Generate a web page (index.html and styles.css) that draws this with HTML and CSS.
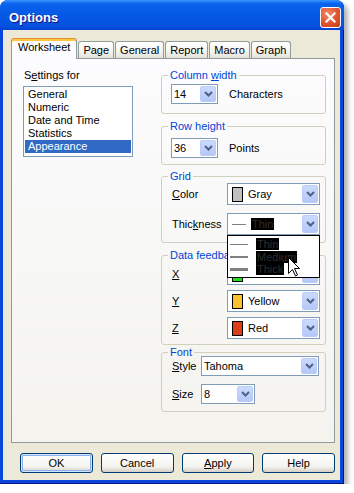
FILE: index.html
```html
<!DOCTYPE html>
<html lang="en">
<head>
  <meta charset="UTF-8">
  <meta name="viewport" content="width=device-width, initial-scale=1.0">
  <title>Options</title>
  <link rel="stylesheet" href="styles.css">
</head>
<body>
  <div class="window">
    <div class="titlebar">
      <span class="title">Options</span>
      <span class="close-btn">
        <svg width="11" height="11" viewBox="0 0 11 11"><path d="M1.5 1.5 L9.5 9.5 M9.5 1.5 L1.5 9.5" stroke="#fff" stroke-width="2.2" stroke-linecap="square"/></svg>
      </span>
    </div>

    <div class="client">
      <div class="tabs">
        <div class="tab active">Worksheet</div>
        <div class="tab">Page</div>
        <div class="tab">General</div>
        <div class="tab">Report</div>
        <div class="tab">Macro</div>
        <div class="tab">Graph</div>
      </div>

      <div class="panel">
        <!-- lista da esquerda -->
        <div class="settings">
          <div class="caption">S<u>e</u>ttings for</div>
          <ul class="listbox">
            <li>General</li>
            <li>Numeric</li>
            <li>Date and Time</li>
            <li>Statistics</li>
            <li class="selected">Appearance</li>
          </ul>
        </div>

        <!-- grupos da direita -->
        <div class="groups">
          <fieldset class="group group-col">
            <legend>Column <u>w</u>idth</legend>
            <div class="field">
              <div class="combo combo-small">
                <span class="value">14</span>
                <span class="drop"><svg width="9" height="6" viewBox="0 0 9 6"><path d="M1 1 L4.5 4.5 L8 1" fill="none" stroke="#4D6185" stroke-width="2"/></svg></span>
              </div>
              <span class="unit">Characters</span>
            </div>
          </fieldset>

          <fieldset class="group group-row">
            <legend>Row height</legend>
            <div class="field">
              <div class="combo combo-small">
                <span class="value">36</span>
                <span class="drop"><svg width="9" height="6" viewBox="0 0 9 6"><path d="M1 1 L4.5 4.5 L8 1" fill="none" stroke="#4D6185" stroke-width="2"/></svg></span>
              </div>
              <span class="unit">Points</span>
            </div>
          </fieldset>

          <fieldset class="group group-grid">
            <legend>Grid</legend>
            <div class="field">
              <span class="field-label"><u>C</u>olor</span>
              <div class="combo combo-color">
                <span class="swatch swatch-gray"></span>
                <span class="value">Gray</span>
                <span class="drop"><svg width="9" height="6" viewBox="0 0 9 6"><path d="M1 1 L4.5 4.5 L8 1" fill="none" stroke="#4D6185" stroke-width="2"/></svg></span>
              </div>
            </div>
            <div class="field">
              <span class="field-label">Thic<u>k</u>ness</span>
              <div class="combo combo-color combo-open">
                <span class="line-sample line-thin"></span>
                <span class="value"><span class="hl">Thin</span></span>
                <span class="drop"><svg width="9" height="6" viewBox="0 0 9 6"><path d="M1 1 L4.5 4.5 L8 1" fill="none" stroke="#4D6185" stroke-width="2"/></svg></span>

                <ul class="droplist">
                  <li><span class="line-sample line-thin"></span><span class="hl">Thin</span></li>
                  <li><span class="line-sample line-medium"></span><span class="hl">Medium</span></li>
                  <li><span class="line-sample line-thick"></span><span class="hl">Thick</span></li>
                </ul>
                <svg class="cursor" width="12" height="20" viewBox="0 0 12 20"><path d="M0.5 0.5 V16.5 L4.5 12.5 L7.5 19 L9.5 18 L6.5 11.5 H11.5 Z" fill="#fff" stroke="#000"/></svg>
              </div>
            </div>
          </fieldset>

          <fieldset class="group group-data">
            <legend>Data feedback</legend>
            <div class="field">
              <span class="field-label"><u>X</u></span>
              <!-- valor fica escondido pela lista aberta -->
              <div class="combo combo-color">
                <span class="swatch swatch-green"></span>
                <span class="value"></span>
                <span class="drop"><svg width="9" height="6" viewBox="0 0 9 6"><path d="M1 1 L4.5 4.5 L8 1" fill="none" stroke="#4D6185" stroke-width="2"/></svg></span>
              </div>
            </div>
            <div class="field">
              <span class="field-label"><u>Y</u></span>
              <div class="combo combo-color">
                <span class="swatch swatch-yellow"></span>
                <span class="value">Yellow</span>
                <span class="drop"><svg width="9" height="6" viewBox="0 0 9 6"><path d="M1 1 L4.5 4.5 L8 1" fill="none" stroke="#4D6185" stroke-width="2"/></svg></span>
              </div>
            </div>
            <div class="field">
              <span class="field-label"><u>Z</u></span>
              <div class="combo combo-color">
                <span class="swatch swatch-red"></span>
                <span class="value">Red</span>
                <span class="drop"><svg width="9" height="6" viewBox="0 0 9 6"><path d="M1 1 L4.5 4.5 L8 1" fill="none" stroke="#4D6185" stroke-width="2"/></svg></span>
              </div>
            </div>
          </fieldset>

          <fieldset class="group group-font">
            <legend>Font</legend>
            <div class="field">
              <span class="field-label"><u>S</u>tyle</span>
              <div class="combo combo-style">
                <span class="value">Tahoma</span>
                <span class="drop"><svg width="9" height="6" viewBox="0 0 9 6"><path d="M1 1 L4.5 4.5 L8 1" fill="none" stroke="#4D6185" stroke-width="2"/></svg></span>
              </div>
            </div>
            <div class="field">
              <span class="field-label"><u>S</u>ize</span>
              <div class="combo combo-size">
                <span class="value">8</span>
                <span class="drop"><svg width="9" height="6" viewBox="0 0 9 6"><path d="M1 1 L4.5 4.5 L8 1" fill="none" stroke="#4D6185" stroke-width="2"/></svg></span>
              </div>
            </div>
          </fieldset>
        </div>
      </div>

      <div class="buttons">
        <button class="btn btn-default">OK</button>
        <button class="btn">Cancel</button>
        <button class="btn"><u>A</u>pply</button>
        <button class="btn">Help</button>
      </div>
    </div>
  </div>
</body>
</html>
```

FILE: styles.css
```css
* {
  box-sizing: border-box;
}

body {
  margin: 0;
  background: #ffffff;
  font-family: "Liberation Sans", Arial, sans-serif;
  font-size: 11px;
  color: #000000;
}

/* Janela */
.window {
  width: 344px;
  height: 484px;
  display: flex;
  flex-direction: column;
  background: #0847da;
  border-radius: 8px 8px 0 0;
  box-shadow: inset -1px -1px 0 #00138c, 4px 4px 5px rgba(0, 0, 0, 0.3);
}

.titlebar {
  height: 30px;
  flex-shrink: 0;
  display: flex;
  align-items: center;
  justify-content: space-between;
  padding: 4px 3px 0 9px;
  border-radius: 8px 8px 0 0;
  background: linear-gradient(#3d95ff 0%, #0a63ec 12%, #0558e5 50%, #0453df 85%, #0342cf 100%);
}

.title {
  color: #ffffff;
  font-weight: bold;
  font-size: 13px;
  text-shadow: 1px 1px 0 #0f1089;
}

.close-btn {
  width: 21px;
  height: 21px;
  display: flex;
  align-items: center;
  justify-content: center;
  border: 1px solid #ffffff;
  border-radius: 3px;
  background: radial-gradient(circle at 35% 30%, #f08a6c, #e0532d 55%, #c2401d);
}

.client {
  flex: 1;
  margin: 0 4px 4px 3px;
  padding: 8px 5px 7px 8px;
  background: #ece9d8;
  display: flex;
  flex-direction: column;
}

/* Abas */
.tabs {
  display: flex;
  align-items: flex-end;
  gap: 1px;
  height: 20px;
}

.tab {
  height: 17px;
  padding: 0 4px;
  line-height: 16px;
  border: 1px solid #919b9c;
  border-bottom: none;
  border-radius: 3px 3px 0 0;
  background: linear-gradient(#ffffff, #f3f3ef 60%, #e2e1d9);
}

.tab.active {
  height: 21px;
  padding: 0 6px;
  margin-bottom: -1px;
  line-height: 17px;
  position: relative;
  z-index: 1;
  border-top: 1px solid #e68b2c;
  box-shadow: inset 0 2px 0 #ffc73c;
  background: #fcfcfe;
}

.panel {
  height: 385px;
  border: 1px solid #919b9c;
  background: linear-gradient(#fcfcfe, #f4f3ee);
  padding: 9px 8px 0 11px;
  display: grid;
  grid-template-columns: 110px 165px;
  column-gap: 28px;
  align-items: start;
}

/* Lista */
.caption {
  line-height: 14px;
  padding-left: 1px;
}

.listbox {
  list-style: none;
  margin: 4px 0 0;
  padding: 1px;
  height: 71px;
  border: 1px solid #7f9db9;
  background: #ffffff;
}

.listbox li {
  line-height: 13px;
  padding-left: 3px;
}

.listbox li.selected {
  background: #316ac5;
  color: #ffffff;
}

/* Grupos */
.groups {
  display: flex;
  flex-direction: column;
}

.group {
  margin: 0;
  min-width: 0;
  border: 1px solid #d0d0bf;
  border-radius: 3px;
  padding: 0 5px 7px 9px;
  display: flex;
  flex-direction: column;
}

.group legend {
  color: #0046d5;
  line-height: 14px;
  padding: 0 2px;
  margin-left: -3px;
}

.group-col {
  padding-top: 2px;
  padding-bottom: 9px;
}

.group-row {
  margin-top: 5px;
  padding-top: 5px;
  padding-bottom: 6px;
}

.group-grid {
  margin-top: 4px;
  gap: 8px;
}

.group-data {
  margin-top: 5px;
  padding-top: 1px;
  padding-bottom: 5px;
  gap: 5px;
}

.group-font {
  gap: 8px;
}

.group-font .field:first-of-type {
  margin-top: -3px;
}

.field {
  display: flex;
  align-items: center;
}

.field-label {
  width: 56px;
  padding-left: 1px;
}

.group-font .field-label {
  width: 30px;
}

.unit {
  margin-left: 11px;
}

/* Combobox */
.combo {
  position: relative;
  display: flex;
  align-items: center;
  height: 20px;
  padding: 1px;
  border: 1px solid #7f9db9;
  background: #ffffff;
}

.combo .value {
  flex: 1;
  padding-left: 1px;
  white-space: nowrap;
}

.combo .drop {
  width: 16px;
  align-self: stretch;
  display: flex;
  align-items: center;
  justify-content: center;
  border: 1px solid #b9cdf7;
  border-radius: 2px;
  background: linear-gradient(#cbdafd, #b4c8f8);
}

.combo-small {
  width: 47px;
}

.combo-color {
  width: 93px;
  height: 22px;
}

.combo-color .value {
  padding-left: 5px;
}

.combo-style {
  width: 118px;
}

.combo-size {
  width: 54px;
}

.swatch {
  width: 11px;
  height: 15px;
  margin-left: 3px;
  border: 1px solid #000000;
}

.swatch-gray { background: #c0c0c0; }
.swatch-green { background: #1ee01e; }
.swatch-yellow { background: #f9c22e; }
.swatch-red { background: #dc3e1a; }

.line-sample {
  width: 14px;
  margin-left: 3px;
  background: #808080;
}

.line-thin { height: 1px; }
.line-medium { height: 2px; }
.line-thick { height: 3px; }

.hl {
  background: #000000;
  color: #2e2e2e;
  padding: 0 1px;
  line-height: 12px;
  display: inline-block;
}

/* Lista aberta */
.droplist {
  position: absolute;
  top: calc(100% + 1px);
  left: -1px;
  width: 93px;
  height: 43px;
  z-index: 5;
  margin: 0;
  padding: 2px 0 0;
  list-style: none;
  border: 1px solid #000000;
  background: #ffffff;
}

.droplist li {
  display: flex;
  align-items: center;
  height: 12.5px;
}

.droplist .line-sample {
  width: 18px;
  margin: 0 8px 0 2px;
}

.cursor {
  position: absolute;
  left: 60px;
  top: 43px;
  z-index: 6;
}

/* Botoes */
.buttons {
  display: flex;
  gap: 8px;
  margin: 10px 0 0 9px;
}

.btn {
  width: 73px;
  height: 20px;
  padding: 0;
  font: inherit;
  color: #000000;
  border: 1px solid #003c74;
  border-radius: 3px;
  background: linear-gradient(#ffffff, #f3f3ef 70%, #d6d0c5);
}

.btn-default {
  box-shadow: inset 0 0 0 1px #cee7ff, inset 0 0 0 2px #8fb0ee;
}
```
